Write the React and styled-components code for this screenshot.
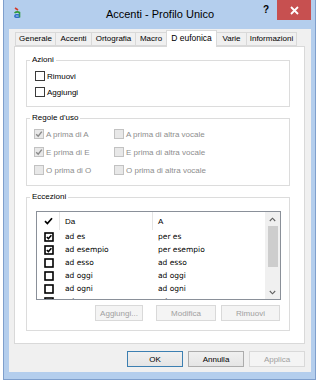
import React from "react";
import styled, { createGlobalStyle } from "styled-components";

const GlobalStyle = createGlobalStyle`
  html, body {
    margin: 0;
    padding: 0;
    background: #ffffff;
  }
  body {
    font-family: "Liberation Sans", Arial, sans-serif;
    font-size: 8px;
    color: #000;
  }
  * {
    box-sizing: border-box;
  }
`;

const tabs = ["Generale", "Accenti", "Ortografia", "Macro", "D eufonica", "Varie", "Informazioni"];
const tabWidths = [41, 37, 45, 32, 51, 31, 51];

const regole = [
  { label: "A prima di A", checked: true },
  { label: "A prima di altra vocale", checked: false },
  { label: "E prima di E", checked: true },
  { label: "E prima di altra vocale", checked: false },
  { label: "O prima di O", checked: false },
  { label: "O prima di altra vocale", checked: false },
];

const eccezioni = [
  { da: "ad es", a: "per es", checked: true },
  { da: "ad esempio", a: "per esempio", checked: true },
  { da: "ad esso", a: "ad esso", checked: false },
  { da: "ad oggi", a: "ad oggi", checked: false },
  { da: "ad ogni", a: "ad ogni", checked: false },
  { da: "ad ora", a: "ad ora", checked: false },
];

export default function App() {
  return (
    <>
      <GlobalStyle />
      <Window>
        <TitleBar>
          <TitleIcon>
            <AppIcon />
          </TitleIcon>
          <Title>Accenti - Profilo Unico</Title>
          <TitleControls>
            <Help>?</Help>
            <Close>
              <svg width="9" height="9" viewBox="0 0 9 9">
                <path d="M1 1 L8 8 M8 1 L1 8" stroke="#fff" strokeWidth="1.8" />
              </svg>
            </Close>
          </TitleControls>
        </TitleBar>

        <Body>
          <TabBar>
            {tabs.map((t, i) => (
              <Tab key={t} $active={i === 4} style={{ width: tabWidths[i] }}>
                {t}
              </Tab>
            ))}
          </TabBar>

          <Panel>
            <Group>
              <Legend>Azioni</Legend>
              <ActionList>
                <CheckRow>
                  <CheckBox />
                  <span>Rimuovi</span>
                </CheckRow>
                <CheckRow>
                  <CheckBox />
                  <span>Aggiungi</span>
                </CheckRow>
              </ActionList>
            </Group>

            <Group>
              <Legend>Regole d'uso</Legend>
              <RuleGrid>
                {regole.map((r) => (
                  <CheckRow key={r.label} $disabled>
                    <CheckBox checked={r.checked} disabled />
                    <span>{r.label}</span>
                  </CheckRow>
                ))}
              </RuleGrid>
            </Group>

            <Group>
              <Legend>Eccezioni</Legend>
              <ExceptionsBody>
                <ListView>
                  <ListContent>
                    <ListHeader>
                      <HeadCell $w={23} $center>
                        <svg width="9" height="8" viewBox="0 0 9 8">
                          <path d="M1 4.2 L3.4 6.6 L8 1.2" stroke="#000" strokeWidth="1.7" fill="none" />
                        </svg>
                      </HeadCell>
                      <HeadCell $w={93}>Da</HeadCell>
                      <HeadCell>A</HeadCell>
                    </ListHeader>
                    {eccezioni.map((e) => (
                      <ListRow key={e.da}>
                        <Cell $w={23} $center>
                          <RowCheck checked={e.checked} />
                        </Cell>
                        <Cell $w={93}>{e.da}</Cell>
                        <Cell>{e.a}</Cell>
                      </ListRow>
                    ))}
                  </ListContent>
                  <ScrollBar>
                    <ScrollButton>
                      <svg width="7" height="5" viewBox="0 0 7 5">
                        <path d="M0.8 4 L3.5 1.2 L6.2 4" stroke="#606060" strokeWidth="1.1" fill="none" />
                      </svg>
                    </ScrollButton>
                    <Track>
                      <Thumb />
                    </Track>
                    <ScrollButton>
                      <svg width="7" height="5" viewBox="0 0 7 5">
                        <path d="M0.8 1 L3.5 3.8 L6.2 1" stroke="#606060" strokeWidth="1.1" fill="none" />
                      </svg>
                    </ScrollButton>
                  </ScrollBar>
                </ListView>
                <SmallButtons>
                  <SmallButton style={{ width: 48 }} disabled>Aggiungi...</SmallButton>
                  <SmallButton style={{ width: 60 }} disabled>Modifica</SmallButton>
                  <SmallButton style={{ width: 59 }} disabled>Rimuovi</SmallButton>
                </SmallButtons>
              </ExceptionsBody>
            </Group>
          </Panel>

          <DialogButtons>
            <DlgButton $default>OK</DlgButton>
            <DlgButton>Annulla</DlgButton>
            <DlgButton disabled>Applica</DlgButton>
          </DialogButtons>
        </Body>
      </Window>
    </>
  );
}

function AppIcon() {
  return (
    <svg width="9" height="12" viewBox="0 0 9 12">
      <path d="M2 1 L5 3" stroke="#d23a2a" strokeWidth="1.6" />
      <path d="M1.5 6 Q4 4 6.5 5.5 L6.5 10.5" stroke="#2f9a3a" strokeWidth="1.6" fill="none" />
      <path d="M6.5 8 Q2 7 1.8 9.2 Q2 11 6.5 10" stroke="#2d6fc7" strokeWidth="1.5" fill="none" />
    </svg>
  );
}

function CheckBox({ checked, disabled }) {
  return (
    <Box $disabled={disabled}>
      {checked && (
        <svg width="8" height="8" viewBox="0 0 8 8">
          <path
            d="M1.2 4.2 L3.2 6.2 L6.8 1.6"
            stroke={disabled ? "#8a8a8a" : "#000"}
            strokeWidth="1.4"
            fill="none"
          />
        </svg>
      )}
    </Box>
  );
}

function RowCheck({ checked }) {
  return (
    <svg width="10" height="10" viewBox="0 0 10 10">
      <rect x="1" y="1" width="8" height="8" fill="#fff" stroke="#000" strokeWidth="1.6" />
      {checked && <path d="M2.8 5 L4.4 6.6 L7.4 3.2" stroke="#000" strokeWidth="1.5" fill="none" />}
    </svg>
  );
}

const Window = styled.div`
  margin-left: 3px;
  width: 313px;
  height: 380px;
  display: flex;
  flex-direction: column;
  padding: 0 4px 7px 5px;
  background: #b4ceed;
  border: 1px solid #7f9fcc;
  border-top: none;
`;

const TitleBar = styled.div`
  height: 30px;
  display: grid;
  grid-template-columns: 1fr auto 1fr;
  align-items: start;
`;

const TitleIcon = styled.div`
  padding: 7px 0 0 4px;
`;

const Title = styled.div`
  margin-top: 7px;
  font-size: 11px;
  line-height: 14px;
  color: #000;
  white-space: nowrap;
`;

const TitleControls = styled.div`
  display: flex;
  justify-content: flex-end;
  align-items: flex-start;
`;

const Help = styled.div`
  margin: 4px 8px 0 0;
  font-size: 10px;
  font-weight: bold;
  line-height: 12px;
  color: #000;
`;

const Close = styled.div`
  width: 34px;
  height: 20px;
  background: #c75050;
  display: flex;
  align-items: center;
  justify-content: center;
`;

const Body = styled.div`
  flex: 1;
  display: flex;
  flex-direction: column;
  background: #f0f0f0;
  padding: 1px 6px 5px 5px;
`;

const TabBar = styled.div`
  height: 16px;
  display: flex;
  align-items: flex-end;
  padding-left: 2px;
`;

const Tab = styled.div`
  height: ${(p) => (p.$active ? "17px" : "14px")};
  margin-left: -1px;
  margin-bottom: ${(p) => (p.$active ? "-1px" : "0")};
  position: relative;
  z-index: ${(p) => (p.$active ? 1 : 0)};
  border: 1px solid #d9d9d9;
  border-bottom: ${(p) => (p.$active ? "none" : "1px solid #d9d9d9")};
  background: ${(p) => (p.$active ? "#ffffff" : "#f0f0f0")};
  font-size: ${(p) => (p.$active ? "8.5px" : "8px")};
  line-height: ${(p) => (p.$active ? "14px" : "12px")};
  text-align: center;
  white-space: nowrap;
  color: #000;
`;

const Panel = styled.div`
  height: 298px;
  background: #ffffff;
  border: 1px solid #d9d9d9;
  padding: 8px 14px 0 11px;
  display: flex;
  flex-direction: column;
  gap: 6px;
`;

const Group = styled.fieldset`
  margin: 0;
  padding: 0;
  min-width: 0;
  border: 1px solid #dcdcdc;
`;

const Legend = styled.legend`
  margin-left: 3px;
  padding: 0 2px;
  font-size: 8px;
  line-height: 10px;
  color: #000;
`;

const ActionList = styled.div`
  padding: 3px 0 6px 8px;
  display: flex;
  flex-direction: column;
`;

const CheckRow = styled.div`
  height: ${(p) => (p.$disabled ? "18px" : "16px")};
  display: flex;
  align-items: center;
  gap: 2px;
  white-space: nowrap;
  color: ${(p) => (p.$disabled ? "#8d8d8d" : "#000")};
`;

const Box = styled.div`
  width: 10px;
  height: 10px;
  flex: none;
  border: 1px solid ${(p) => (p.$disabled ? "#c2c2c2" : "#3a3a3a")};
  background: ${(p) => (p.$disabled ? "#e8e8e8" : "#ffffff")};
  display: flex;
  align-items: center;
  justify-content: center;
`;

const RuleGrid = styled.div`
  padding: 2px 0 6px 7px;
  display: grid;
  grid-template-columns: 80px 1fr;
`;

const ExceptionsBody = styled.div`
  padding: 9px 8px 9px 9px;
  display: flex;
  flex-direction: column;
`;

const ListView = styled.div`
  height: 89px;
  display: flex;
  border: 1px solid #8a9099;
  background: #ffffff;
`;

const ListContent = styled.div`
  flex: 1;
  overflow: hidden;
`;

const ListHeader = styled.div`
  height: 18px;
  display: flex;
  align-items: stretch;
  color: #000;
`;

const HeadCell = styled.div`
  width: ${(p) => (p.$w ? `${p.$w}px` : "auto")};
  flex: ${(p) => (p.$w ? "none" : "1")};
  display: flex;
  align-items: center;
  justify-content: ${(p) => (p.$center ? "center" : "flex-start")};
  padding-left: ${(p) => (p.$center ? "0" : "5px")};
  border-right: ${(p) => (p.$w ? "1px solid #e5e5e5" : "none")};
  font-size: 8px;
`;

const ListRow = styled.div`
  height: 13px;
  display: flex;
  align-items: center;
`;

const Cell = styled.div`
  width: ${(p) => (p.$w ? `${p.$w}px` : "auto")};
  flex: ${(p) => (p.$w ? "none" : "1")};
  display: flex;
  align-items: center;
  justify-content: ${(p) => (p.$center ? "center" : "flex-start")};
  padding-left: ${(p) => (p.$center ? "0" : "5px")};
  font-family: "DejaVu Sans", Verdana, sans-serif;
  font-size: 7.5px;
  white-space: nowrap;
`;

const ScrollBar = styled.div`
  width: 15px;
  display: flex;
  flex-direction: column;
  background: #f0f0f0;
`;

const ScrollButton = styled.div`
  height: 14px;
  display: flex;
  align-items: center;
  justify-content: center;
`;

const Track = styled.div`
  flex: 1;
  padding: 0 2px 0 3px;
`;

const Thumb = styled.div`
  height: 41px;
  background: #cdcdcd;
`;

const SmallButtons = styled.div`
  margin-top: 5px;
  display: flex;
  justify-content: flex-end;
  gap: 5px;
  padding-right: 1px;

  & > :first-child {
    margin-right: 8px;
  }
`;

const SmallButton = styled.button`
  height: 16px;
  padding: 0;
  border: 1px solid #d9d9d9;
  background: #f4f4f4;
  color: #a0a0a0;
  font-family: "Liberation Sans", Arial, sans-serif;
  font-size: 8px;
`;

const DialogButtons = styled.div`
  margin-top: 7px;
  display: flex;
  justify-content: flex-end;
  gap: 5px;
`;

const DlgButton = styled.button`
  width: 56px;
  height: 16px;
  padding: 0;
  font-family: "Liberation Sans", Arial, sans-serif;
  font-size: 8px;
  border: 1px solid ${(p) => (p.$default ? "#3c7fb1" : p.disabled ? "#d9d9d9" : "#acacac")};
  background: ${(p) => (p.disabled ? "#f4f4f4" : "linear-gradient(#f0f0f0, #e5e5e5)")};
  color: ${(p) => (p.disabled ? "#a0a0a0" : "#000")};
`;
